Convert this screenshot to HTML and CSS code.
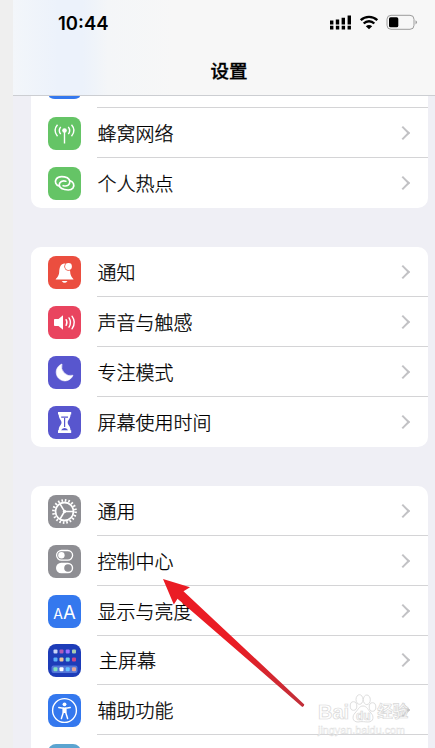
FILE: index.html
```html
<!DOCTYPE html>
<html lang="zh-CN">
<head>
    <meta charset="UTF-8">
    <meta name="viewport" content="width=device-width, initial-scale=1.0">
    <title>设置</title>
    <link rel="stylesheet" href="styles.css">
</head>
<body>
    <div class="phone">
        <header class="header">
            <div class="status">
                <span class="time">10:44</span>
                <svg class="status-icons" width="90" height="18" viewBox="0 0 90 18">
                    <!-- signal -->
                    <path d="M1.700 8.500v4M7.500 7.500v5M13.300 5.700v6.800M19.300 3.500v9" stroke="#000" stroke-width="3.400"/>
                    <path d="M0 15.600h21.500" stroke="#000" stroke-width="3.600" stroke-dasharray="3.400 2.450"/>
                    <!-- wifi -->
                    <g fill="none" stroke="#000" stroke-width="2.400">
                        <path d="M30.700 8.200a12 12 0 0 1 16.600 0M33.700 11.500a7.500 7.500 0 0 1 10.600 0"/>
                    </g>
                    <path d="M35.800 14.200q3.200-2.600 6.400 0L39 17.300z"/>
                    <!-- battery -->
                    <rect x="57" y="3.300" width="27" height="14" rx="4" fill="none" stroke="#9b9b9b"/>
                    <rect x="59" y="5.300" width="9.300" height="10" rx="1.600"/>
                    <path d="M85.500 8.200q3.200 2 0 4.200z" fill="#9b9b9b"/>
                </svg>
            </div>
            <h1>设置</h1>
        </header>

        <main>
            <section class="card card-top">
                <div class="row row-cut">
                    <div class="icon blue icon-cut"></div>
                    <div class="cell"></div>
                </div>
                <div class="row">
                    <svg class="icon green" viewBox="0 0 33 33">
                        <circle cx="16.500" cy="13.500" r="2.300" fill="#fff"/>
                        <path d="M16.500 14v12.500M12.700 9.800q-2.700 3.700 0 7.400M20.300 9.800q2.700 3.700 0 7.400M9.500 7.800q-5 5.700 0 11.400M23.500 7.800q5 5.700 0 11.400" fill="none" stroke="#fff" stroke-width="1.400"/>
                    </svg>
                    <div class="cell"><span>蜂窝网络</span><i class="chevron"></i></div>
                </div>
                <div class="row">
                    <svg class="icon green" viewBox="0 0 33 33">
                        <g fill="none" stroke="#fff" stroke-width="1.700" stroke-linecap="round">
                            <path d="M11.500 19.200C7.500 18.500 6.500 14.500 8.300 11.900C10 9.500 13 9.300 16.500 9.900C21 10.700 22.800 13.700 21.500 16.500C20.500 18.700 18 19.400 15.200 18.700"/>
                            <path d="M21.500 13.700C25.500 14.500 26.800 18 25 20.900C23.300 23.400 20 23.300 16.500 22.500C12 21.500 10.300 18.900 11.700 16.200C12.800 14.100 15 13.500 17.800 14.200"/>
                        </g>
                    </svg>
                    <div class="cell"><span>个人热点</span><i class="chevron"></i></div>
                </div>
            </section>

            <section class="card">
                <div class="row">
                    <svg class="icon orange" viewBox="0 0 33 33">
                        <path d="M7.700 23.500c0-1 3.300-2.800 3.500-7.500.2-5 1.500-8.300 5.300-8.600 4.500.3 5.500 3.600 5.700 8.600.2 4.700 3.300 6.500 3.300 7.500z" fill="#fff"/>
                        <path d="M13.700 24.900h5.800q-2.900 3.800-5.800 0z" fill="#fff"/>
                        <circle cx="20.500" cy="10.500" r="4.200" fill="#eb4e3f"/>
                        <circle cx="20.500" cy="10.500" r="3.400" fill="#fff"/>
                    </svg>
                    <div class="cell"><span>通知</span><i class="chevron"></i></div>
                </div>
                <div class="row">
                    <svg class="icon pink" viewBox="0 0 33 33">
                        <path d="M6 13.800q0-.8.800-.8h3.700l4.500-3.700v14.400L10.500 20H6.800q-.8 0-.8-.8z" fill="#fff"/>
                        <path d="M18.100 13.700q1.700 2.800 0 5.600M21 11.900q3 4.600 0 9.200M24 10.200q4.600 6.300 0 12.600" fill="none" stroke="#fff" stroke-width="1.400" stroke-linecap="round"/>
                    </svg>
                    <div class="cell"><span>声音与触感</span><i class="chevron"></i></div>
                </div>
                <div class="row">
                    <svg class="icon purple" viewBox="0 0 33 33">
                        <path d="M14 8a8.700 8.700 0 1 0 11 11.300A9 9 0 0 1 14 8z" fill="#fff" stroke="#fff" stroke-width=".6" stroke-linejoin="round"/>
                    </svg>
                    <div class="cell"><span>专注模式</span><i class="chevron"></i></div>
                </div>
                <div class="row">
                    <svg class="icon purple" viewBox="0 0 33 33">
                        <path d="M10 6h13.200v2.500h-.7c0 4.500-2.800 5.500-2.800 8s2.800 3.500 2.800 7.700h.7V27H10v-2.800h.7c0-4.200 2.800-5.200 2.800-7.700s-2.800-3.500-2.800-8H10z" fill="#fff"/>
                        <path d="M13.200 11.200h6.800M16.600 12v9" stroke="#5856ce" stroke-width="1.200"/>
                        <path d="M13 24.200q3.600-4.600 7.200 0z" fill="#5856ce"/>
                    </svg>
                    <div class="cell"><span>屏幕使用时间</span><i class="chevron"></i></div>
                </div>
            </section>

            <section class="card">
                <div class="row">
                    <svg class="icon gray" viewBox="0 0 33 33">
                        <g fill="none" stroke="#fff">
                            <circle cx="16.500" cy="16.500" r="9" stroke-width="1.800"/>
                            <circle cx="16.500" cy="16.500" r="11.100" stroke-width="2.600" stroke-dasharray="1.600 1.888"/>
                            <path d="M16.500 16.500h9M16.500 16.500l-4.700-8M16.500 16.500l-4.700 8" stroke-width="1.500"/>
                        </g>
                        <circle cx="16.500" cy="16.500" r="1.700" fill="#fff"/>
                    </svg>
                    <div class="cell"><span>通用</span><i class="chevron"></i></div>
                </div>
                <div class="row">
                    <svg class="icon gray" viewBox="0 0 33 33">
                        <rect x="8.600" y="5.500" width="16" height="9.600" rx="4.800" fill="none" stroke="#fff" stroke-width="1.300"/>
                        <circle cx="13.400" cy="10.300" r="3.200" fill="#fff"/>
                        <rect x="8" y="17.800" width="17.200" height="10.400" rx="5.200" fill="#fff"/>
                        <circle cx="20" cy="23" r="3.800" fill="#8e8e93"/>
                    </svg>
                    <div class="cell"><span>控制中心</span><i class="chevron"></i></div>
                </div>
                <div class="row">
                    <div class="icon blue letters"><small>A</small>A</div>
                    <div class="cell"><span>显示与亮度</span><i class="chevron"></i></div>
                </div>
                <div class="row row-short">
                    <svg class="icon navy" viewBox="0 0 33 33">
                        <rect x="3.500" y="21.500" width="26" height="7.500" rx="2" fill="#5376d8"/>
                        <rect x="5.500" y="5.500" width="4" height="4" rx="1" fill="#c8d3f6"/>
                        <rect x="11.500" y="5.500" width="4" height="4" rx="1" fill="#b25ab5"/>
                        <rect x="17.700" y="5.500" width="4" height="4" rx="1" fill="#9b70ff"/>
                        <rect x="24" y="5.500" width="4" height="4" rx="1" fill="#a7cdb0"/>
                        <rect x="5.500" y="13.500" width="4" height="4" rx="1" fill="#5aaefa"/>
                        <rect x="11.500" y="13.500" width="4" height="4" rx="1" fill="#efc49a"/>
                        <rect x="17.700" y="13.500" width="4" height="4" rx="1" fill="#6fcce6"/>
                        <rect x="24" y="13.500" width="4" height="4" rx="1" fill="#c8468c"/>
                        <rect x="5.500" y="23.300" width="4" height="4" rx="1" fill="#7fe0c0"/>
                        <rect x="11.500" y="23.300" width="4" height="4" rx="1" fill="#fff"/>
                        <rect x="17.700" y="23.300" width="4" height="4" rx="1" fill="#66c2ff"/>
                        <rect x="24" y="23.300" width="4" height="4" rx="1" fill="#e5a59b"/>
                    </svg>
                    <div class="cell cell-home"><span>主屏幕</span><i class="chevron"></i></div>
                </div>
                <div class="row">
                    <svg class="icon blue" viewBox="0 0 33 33">
                        <circle cx="16.500" cy="16.500" r="11.900" fill="none" stroke="#fff" stroke-width="1.400"/>
                        <circle cx="16.500" cy="10.300" r="1.900" fill="#fff"/>
                        <path d="M10.800 13.600q5.700 1.300 11.400 0M15.300 14v4.500l-1.900 6M17.700 14v4.500l1.900 6" fill="none" stroke="#fff" stroke-width="1.500" stroke-linecap="round"/>
                        <path d="M14.700 14h3.600v5h-3.600z" fill="#fff"/>
                    </svg>
                    <div class="cell"><span>辅助功能</span><i class="chevron"></i></div>
                </div>
                <div class="row">
                    <div class="icon sky"></div>
                    <div class="cell"></div>
                </div>
            </section>
        </main>
    </div>

    <svg class="arrow" width="144" height="130" viewBox="0 0 144 130">
        <defs>
            <linearGradient id="red" x1="0" y1="0" x2="1" y2="1">
                <stop offset="0.5" stop-color="#ea1c24"/>
                <stop offset="1" stop-color="#c0303a"/>
            </linearGradient>
        </defs>
        <path d="M0 0l27 8.300-6.500 4L141.300 125.500q0 2-2 2.400L14.500 19.800l-3.700 5.700z" fill="url(#red)"/>
    </svg>

    <div class="watermark">
        <div class="brand">
            <span class="bai">Bai</span>
            <svg width="28" height="30" viewBox="0 0 28 30">
                <g fill="#fff" stroke="#d9d9d9">
                    <ellipse cx="4.500" cy="12" rx="3.300" ry="4.300"/>
                    <ellipse cx="10.500" cy="5.500" rx="3.500" ry="4.800"/>
                    <ellipse cx="17.800" cy="5.800" rx="3.500" ry="4.800"/>
                    <ellipse cx="23.500" cy="13" rx="3.300" ry="4.300"/>
                    <path d="M14 12c4 0 5 4 8 7s3 9-3 9c-3 0-6-1-10 0-6 0-6-6-3-9s4-7 8-7z"/>
                </g>
                <text x="7" y="26" class="du">du</text>
            </svg>
            <span class="jy">经验</span>
        </div>
        <div class="url">jingyan.baidu.com</div>
    </div>
</body>
</html>
```
FILE: styles.css
```css
* {
    box-sizing: border-box;
}
body {
    margin: 0;
    height: 748px;
    overflow: hidden;
    position: relative;
    padding-left: 13px;
    background-color: #efefef;
    color: #000;
    font-family: "Noto Sans CJK SC", sans-serif;
}
.phone {
    height: 748px;
    overflow: hidden;
    background-color: #efeff5;
}
.header {
    height: 96px;
    border-bottom: 1px solid #ccced2;
    background: linear-gradient(90deg, #f3f6fa, #ecf2fb 45px, #ecf2fb 70px, #f4f6f8 95px, #f7f7f7 160px);
}
.status {
    display: flex;
    justify-content: space-between;
    align-items: center;
    height: 46px;
    padding: 0 15px 0 45px;
}
.time {
    font-family: Inter, sans-serif;
    font-size: 18.5px;
    font-weight: 600;
}
.status-icons {
    margin-bottom: 4px;
}
h1 {
    margin: 0;
    padding-left: 10px;
    font-size: 18.5px;
    font-weight: 500;
    line-height: 48px;
    text-align: center;
    -webkit-text-stroke: 0.3px #000;
}
.card {
    margin: 0 7px 39px 18px;
    border-radius: 10px;
    background-color: #fff;
    overflow: hidden;
}
.card-top {
    border-radius: 0 0 10px 10px;
}
.row {
    display: flex;
    align-items: center;
    height: 50px;
    padding-left: 17px;
}
.row-cut {
    height: 12px;
    align-items: flex-start;
}
.row-short {
    height: 49px;
}
.icon {
    flex: none;
    width: 33px;
    height: 33px;
    border-radius: 8px;
}
.icon-cut {
    width: 31px;
    height: 3px;
    margin: 0 1px;
    border-radius: 0 0 6px 6px / 0 0 3px 3px;
}
.cell {
    flex: 1;
    display: flex;
    align-items: center;
    justify-content: space-between;
    height: 100%;
    margin-left: 16px;
    padding-right: 18px;
    border-bottom: 1px solid #d4d4d6;
    font-size: 19px;
    font-weight: 300;
    line-height: 28px;
    -webkit-text-stroke: 0.25px #000;
}
.cell span {
    padding-left: 0.5px;
}
.cell-home span {
    padding-left: 2px;
}
.row:last-child .cell {
    border-bottom: none;
}
.chevron {
    width: 10px;
    height: 10px;
    margin-right: 2px;
    border-top: 2px solid #c2c2c5;
    border-right: 2px solid #c2c2c5;
    transform: rotate(45deg);
}
.green { background-color: #65c466; }
.orange { background-color: #eb4e3f; }
.pink { background-color: #e9445f; }
.purple { background-color: #5856ce; }
.gray { background-color: #8e8e93; }
.blue { background-color: #3478ee; }
.navy { background-color: #1d3cb8; }
.sky { background-color: #5ba4d0; }
.letters {
    display: flex;
    align-items: baseline;
    justify-content: center;
    color: #fff;
    font-family: Inter, sans-serif;
    font-size: 18.5px;
    line-height: 34px;
}
.letters small {
    font-size: 14px;
}
/* red pointer over the list */
.arrow {
    position: absolute;
    left: 163px;
    top: 579px;
}
.watermark {
    position: absolute;
    left: 318px;
    top: 693px;
    width: 92px;
    color: #fff;
    opacity: 0.85;
    font-family: "Liberation Sans", "Noto Sans CJK SC", sans-serif;
    -webkit-text-stroke: 0.7px #d2d2d2;
}
.brand {
    display: flex;
    align-items: flex-end;
    height: 31px;
    font-size: 20px;
    font-weight: 700;
    line-height: 24px;
}
.brand svg {
    flex: none;
}
.brand .jy {
    font-size: 15.5px;
    white-space: nowrap;
}
.du {
    font-size: 12px;
    fill: #fff;
    stroke: #d2d2d2;
    stroke-width: 0.7px;
}
.url {
    font-size: 10.8px;
    line-height: 13px;
    -webkit-text-stroke: 0.4px #d6d6d6;
}
```
